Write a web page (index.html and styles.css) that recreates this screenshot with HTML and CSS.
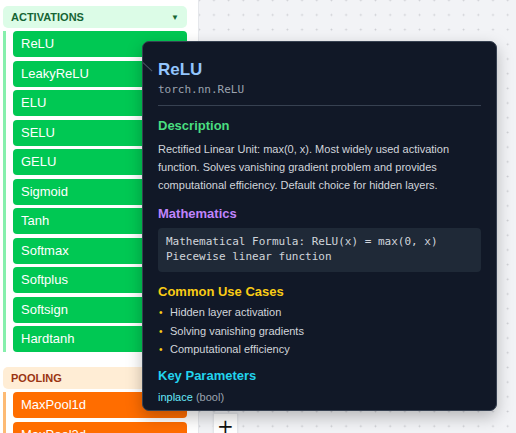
FILE: index.html
```html
<!DOCTYPE html>
<html>
<head>
<meta charset="utf-8">
<link rel="stylesheet" href="styles.css">
</head>
<body>
<div class="app">
  <aside class="sidebar">
    <div class="group">
      <div class="group-head act-head"><span>ACTIVATIONS</span><span class="caret">▼</span></div>
      <div class="group-list act-list">
        <div class="item act">ReLU</div>
        <div class="item act">LeakyReLU</div>
        <div class="item act">ELU</div>
        <div class="item act">SELU</div>
        <div class="item act">GELU</div>
        <div class="item act">Sigmoid</div>
        <div class="item act">Tanh</div>
        <div class="item act">Softmax</div>
        <div class="item act">Softplus</div>
        <div class="item act">Softsign</div>
        <div class="item act">Hardtanh</div>
      </div>
    </div>
    <div class="group">
      <div class="group-head pool-head"><span>POOLING</span></div>
      <div class="group-list pool-list">
        <div class="item pool">MaxPool1d</div>
        <div class="item pool">MaxPool2d</div>
      </div>
    </div>
  </aside>
  <main class="canvas">
    <div class="controls"><button class="ctrl-btn">+</button></div>
  </main>
  <div class="tooltip">
    <span class="tt-arrow"></span>
    <div class="tt-title">ReLU</div>
    <div class="tt-sub">torch.nn.ReLU</div>
    <div class="tt-divider"></div>
    <div class="tt-h h-desc">Description</div>
    <p class="tt-text">Rectified Linear Unit: max(0, x). Most widely used activation function. Solves vanishing gradient problem and provides computational efficiency. Default choice for hidden layers.</p>
    <div class="tt-h h-math">Mathematics</div>
    <pre class="tt-code">Mathematical Formula: ReLU(x) = max(0, x)
Piecewise linear function</pre>
    <div class="tt-h h-use">Common Use Cases</div>
    <ul class="tt-list">
      <li><span class="dot">•</span>Hidden layer activation</li>
      <li><span class="dot">•</span>Solving vanishing gradients</li>
      <li><span class="dot">•</span>Computational efficiency</li>
    </ul>
    <div class="tt-h h-param">Key Parameters</div>
    <div class="tt-param"><span class="pname">inplace</span> <span class="ptype">(bool)</span></div>
  </div>
</div>
</body>
</html>
```
FILE: styles.css
```css
* { box-sizing: border-box; }
html, body { margin: 0; padding: 0; height: 100%; overflow: hidden; }
body { font-family: "Liberation Sans", Arial, sans-serif; }

.app { display: flex; height: 433px; position: relative; }

.sidebar {
  width: 199px;
  flex: none;
  background: #ffffff;
  border-right: 1px solid #e5e7eb;
  padding: 6px 11px 0 3px;
  overflow: hidden;
}
.group { margin-bottom: 15px; }
.group-head {
  height: 22px;
  border-radius: 5px;
  display: flex;
  align-items: center;
  justify-content: space-between;
  padding: 0 8px 0 8px;
  font-size: 11px;
  font-weight: 700;
}
.act-head { background: #dcfce7; color: #166534; }
.pool-head { background: #ffedd5; color: #9a3412; }
.caret { font-size: 8px; }

.group-list {
  margin-top: 3px;
  border-left: 3px solid #86efac;
  padding-left: 7px;
  display: flex;
  flex-direction: column;
  gap: 3.5px;
}
.pool-list { border-left-color: #fdba74; gap: 4px; }
.item {
  height: 26px;
  border-radius: 4px;
  color: #ffffff;
  font-size: 13px;
  line-height: 26px;
  padding-left: 8px;
}
.act { background: #00c853; }
.pool { background: #ff6d00; }

.canvas {
  flex: 1;
  position: relative;
  background-color: #f2f3f6;
  background-image: radial-gradient(circle, #cbccd1 0.8px, transparent 1.1px);
  background-size: 14.7px 14.7px;
  background-position: 7.6px 7.6px;
}
.controls {
  position: absolute;
  left: 14px;
  top: 413px;
  background: #ffffff;
  border: 1px solid #e5e7eb;
  box-shadow: 0 0 2px rgba(0,0,0,0.08);
}
.ctrl-btn {
  display: block;
  width: 23px;
  height: 24px;
  border: 0;
  background: #ffffff;
  font-family: "DejaVu Sans", sans-serif;
  font-size: 20px;
  line-height: 22px;
  padding: 0;
  color: #111111;
}

.tooltip {
  position: absolute;
  left: 142px;
  top: 41px;
  width: 355px;
  height: 370px;
  overflow: hidden;
  background: #111827;
  border: 1px solid #374151;
  border-radius: 7px;
  box-shadow: 0 6px 16px rgba(0,0,0,0.25);
  padding: 18px 15px 0 15px;
  color: #d1d5db;
}
.tt-arrow {
  position: absolute;
  left: 0px;
  top: 20px;
  width: 13px;
  height: 1px;
  background: #4b5563;
  transform-origin: 0 0;
  transform: rotate(43deg);
}
.tt-title {
  font-size: 17px;
  font-weight: 700;
  line-height: 20px;
  color: #93c5fd;
}
.tt-sub {
  margin-top: 3px;
  font-family: "DejaVu Sans Mono", monospace;
  font-size: 11px;
  line-height: 14px;
  color: #9ca3af;
}
.tt-divider {
  margin-top: 8px;
  border-top: 1px solid #374151;
}
.tt-h {
  font-size: 13px;
  font-weight: 700;
  line-height: 16px;
  margin-top: 12px;
}
.h-desc { color: #4ade80; }
.h-math { color: #c084fc; }
.h-use { color: #facc15; }
.h-param { color: #22d3ee; margin-top: 11px; }
.tt-text {
  margin: 6px 0 0 0;
  font-size: 11px;
  line-height: 18px;
  color: #d1d5db;
}
.tt-code {
  margin: 6px 0 0 0;
  background: #1f2937;
  border-radius: 4px;
  padding: 6px 8px 8px 8px;
  font-family: "DejaVu Sans Mono", monospace;
  font-size: 11px;
  line-height: 15px;
  color: #d1d5db;
  white-space: pre;
}
.tt-list {
  list-style: none;
  margin: 5px 0 0 0;
  padding: 0;
  font-size: 11px;
  line-height: 15px;
}
.tt-list li { margin-bottom: 3.7px; display: flex; }
.tt-list .dot { color: #facc15; width: 12px; padding-left: 1px; font-size: 10px; }
.tt-param {
  margin-top: 5px;
  font-size: 11px;
  line-height: 16px;
}
.pname { color: #67e8f9; }
.ptype { color: #9ca3af; }
```
